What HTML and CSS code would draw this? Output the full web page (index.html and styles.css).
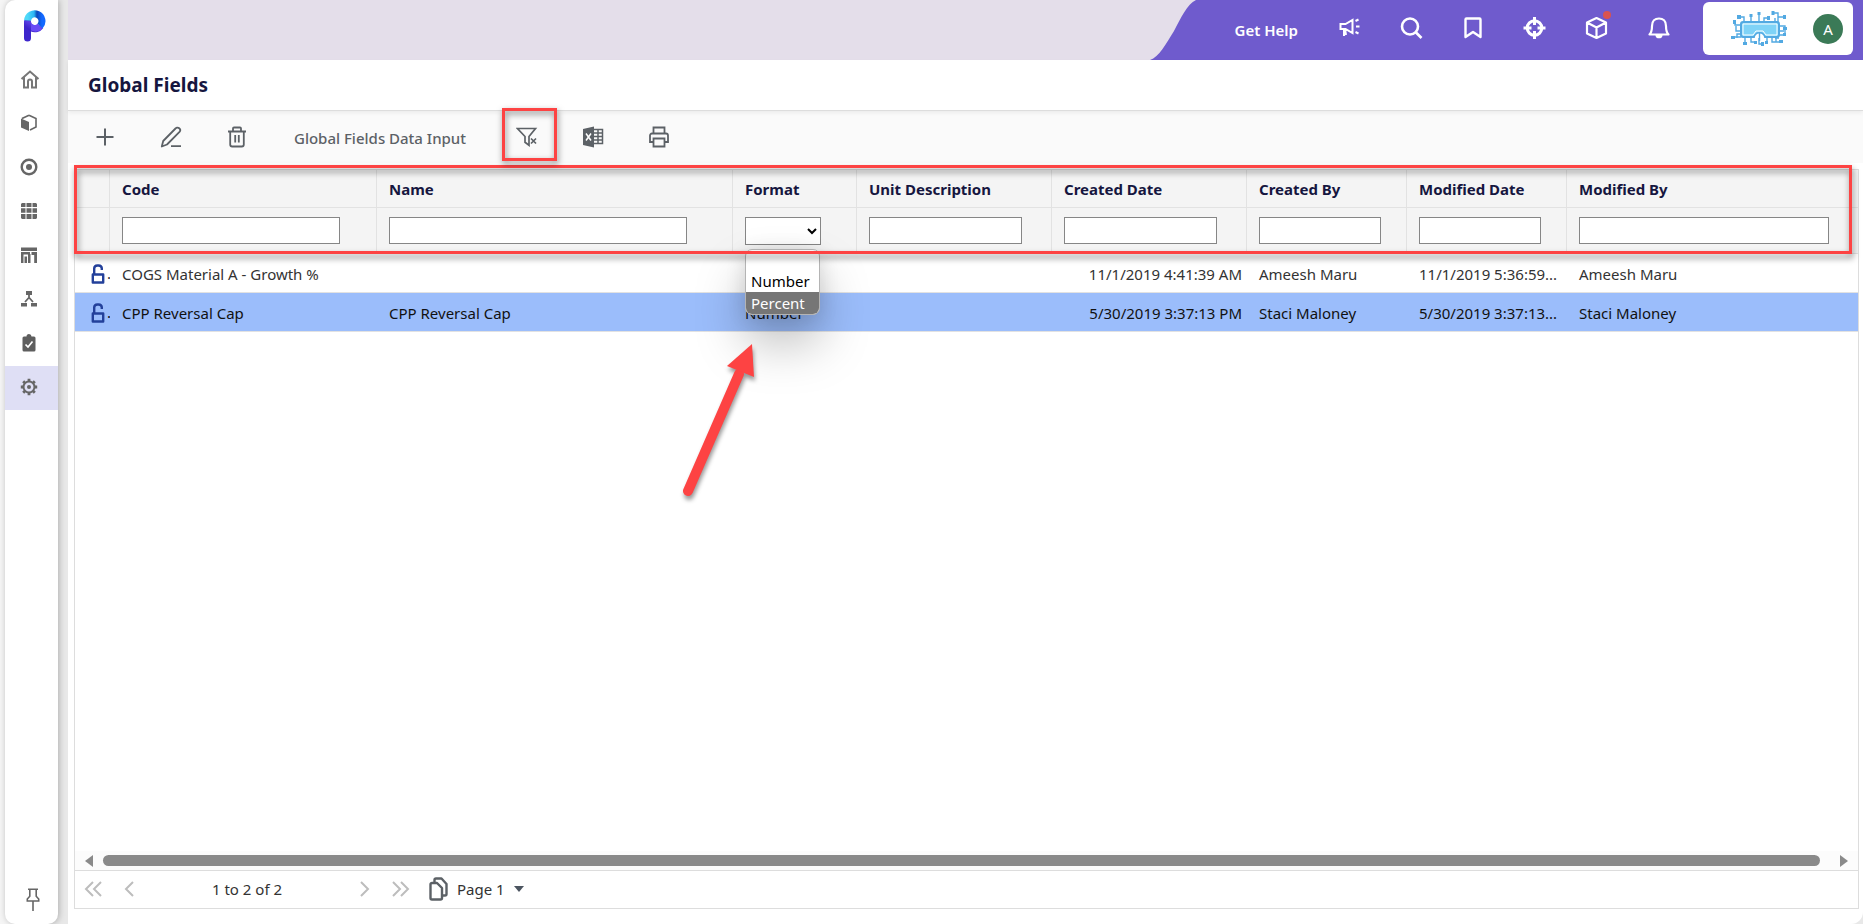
FILE: index.html
```html
<!DOCTYPE html>
<html lang="en">
<head>
<meta charset="utf-8">
<title>Global Fields</title>
<link rel="stylesheet" href="styles.css">
</head>
<body>
<div class="app">
  <nav class="sidebar" aria-label="Main">
    <a class="brand" href="#" aria-label="Home page">
      <svg width="22" height="32" viewBox="0 0 22 32">
        <defs>
          <linearGradient id="stem" x1="0" y1="1" x2="1" y2="0"><stop offset="0" stop-color="#3a22c8"/><stop offset="1" stop-color="#7a5cff"/></linearGradient>
          <linearGradient id="arc" x1="0" y1="0" x2="1" y2="0"><stop offset="0" stop-color="#4fd8f8"/><stop offset=".45" stop-color="#28b4f4"/><stop offset=".65" stop-color="#0a48b8"/><stop offset="1" stop-color="#1268ff"/></linearGradient>
        </defs>
        <path d="M3.500 28V12" stroke="#3d26cc" stroke-width="7" stroke-linecap="round"/>
        <path d="M3.500 11A7.300 7.300 0 0 0 16.500 16" fill="none" stroke="url(#stem)" stroke-width="7"/>
        <path d="M3.600 10.500A7.200 7.200 0 1 1 16 16" fill="none" stroke="url(#arc)" stroke-width="7"/>
        <path d="M17.500 19.500A10 10 0 0 1 7 20.500V13a5 5 0 0 0 7 1z" fill="#6a4cf5"/>
      </svg>
    </a>
    <a class="side-item" href="#" aria-label="Home"><svg width="24" height="24" viewBox="0 0 24 24" fill="none" stroke="#777" stroke-width="2"><path d="M5 11.500h2v9h4v-6a2 2 0 0 1 4 0v6h4v-9h2M4.500 12 13 4.500l8.500 7.500"/></svg></a>
    <a class="side-item" href="#" aria-label="Models"><svg width="18" height="18" viewBox="0 0 18 18"><path d="M9 1.200 16 4.500v8.500L10 16" fill="none" stroke="#666" stroke-width="1.600"/><path d="M9 1.200 2 4.500" stroke="#666" stroke-width="1.600"/><path d="M1 4.500 9 8v9L1 13.500z" fill="#666"/></svg></a>
    <a class="side-item" href="#" aria-label="Targets"><svg width="18" height="18" viewBox="0 0 18 18"><circle cx="9" cy="9" r="7.300" fill="none" stroke="#666" stroke-width="2.400"/><circle cx="9" cy="9" r="3" fill="#666"/></svg></a>
    <a class="side-item" href="#" aria-label="Sheets"><svg width="18" height="18" viewBox="0 0 18 18" fill="#666"><path d="M2 1h3.500v4H1V2zM6.500 1h5v4h-5zM12.500 1H16l1 1v3h-4.500zM1 6.200h4.500v4.600H1zM6.500 6.200h5v4.600h-5zM12.500 6.200H17v4.600h-4.500zM1 12h4.500v5H2l-1-1zM6.500 12h5v5h-5zM12.500 12H17v4l-1 1h-3.500z"/></svg></a>
    <a class="side-item" href="#" aria-label="Reports"><svg width="18" height="18" viewBox="0 0 18 18" fill="#666"><path d="M1 1.500h16V5H1zM1 6h9v2.500H3.500V17H1zM4.500 10.500H7V17H4.500zM8 8h2.500v9H8zM11.500 6H17v11h-2.800V9h-2.700z"/></svg></a>
    <a class="side-item" href="#" aria-label="Hierarchy"><svg width="18" height="18" viewBox="0 0 18 18"><path d="M6 1h6v4H6zM1 13h6v3.500H1zM11 13h6v3.500h-6z" fill="#666"/><path d="M9 5v2.500M5 12l4-4.500 4 4.500" fill="none" stroke="#666" stroke-width="1.800"/></svg></a>
    <a class="side-item" href="#" aria-label="Tasks"><svg width="18" height="18" viewBox="0 0 18 18"><path d="M4 2.500h2.500a2.500 2.500 0 0 1 5 0H14A1.500 1.500 0 0 1 15.500 4v12a1.500 1.500 0 0 1-1.500 1.500H4A1.500 1.500 0 0 1 2.500 16V4A1.500 1.500 0 0 1 4 2.500z" fill="#5e5e5e"/><path d="m5.500 10.500 2.500 2.500 4.500-5.500" fill="none" stroke="#fff" stroke-width="1.700"/></svg></a>
    <a class="side-item side-item-active" href="#" aria-label="Settings"><svg width="18" height="18" viewBox="0 0 18 18" fill="none" stroke="#666"><circle cx="9" cy="9" r="5.500" stroke-width="2"/><circle cx="9" cy="9" r="2" fill="#666" stroke="none"/><path d="M9 .8v2.400M9 14.800v2.400M.8 9h2.400M14.800 9h2.400M3.200 3.200l1.700 1.700M13.100 13.100l1.700 1.700M3.200 14.800l1.700-1.700M13.100 4.900l1.700-1.700" stroke-width="2.800"/></svg></a>
    <button class="pin" type="button" aria-label="Pin menu"><svg width="14" height="24" viewBox="0 0 14 24" fill="none" stroke="#666" stroke-width="1.600"><path d="M2 1.300h10M3.800 1.300v7L1.300 11v2h11.400v-2l-2.500-2.700v-7M7 13v10"/></svg></button>
  </nav>

  <main class="main">
    <header class="topbar">
      <div class="topbar-nav">
        <svg class="wave" width="48" height="60" viewBox="0 0 48 60" aria-hidden="true"><path d="M0 60C9 57 16 44 24 31 31 18 37 4 46 0h2v60z" fill="#6f5bcd"/></svg>
        <a class="help" href="#">Get Help</a>
        <button class="nav-btn" type="button" aria-label="Announcements"><svg width="24" height="24" viewBox="0 0 24 24" fill="none" stroke="#fff" stroke-width="2"><path d="M3.500 8v5h5l7 4V4l-7 4zM7 13v7M8 13l1 6M18.500 5l3-1.500M19 10.500h3.500M18.500 16l3 1.500"/></svg></button>
        <button class="nav-btn" type="button" aria-label="Search"><svg width="24" height="24" viewBox="0 0 24 24" fill="none" stroke="#fff" stroke-width="2.600"><circle cx="11" cy="10.500" r="8"/><path d="m16.500 16 6 6"/></svg></button>
        <button class="nav-btn" type="button" aria-label="Bookmarks"><svg width="24" height="24" viewBox="0 0 24 24" fill="none" stroke="#fff" stroke-width="2.400" stroke-linejoin="round"><path d="M4.500 3.500a1 1 0 0 1 1-1h13a1 1 0 0 1 1 1V21L12 16l-7.500 5z"/></svg></button>
        <button class="nav-btn" type="button" aria-label="Focus"><svg width="24" height="24" viewBox="0 0 24 24" fill="none" stroke="#fff"><circle cx="11.500" cy="12" r="7.300" stroke-width="3"/><path d="M11.500 1v8M11.500 15v8M.5 12h8M14.500 12h8" stroke-width="3"/></svg></button>
        <button class="nav-btn" type="button" aria-label="Packages"><svg width="24" height="24" viewBox="0 0 24 24" fill="none" stroke="#fff" stroke-width="2.200" stroke-linejoin="round"><path d="m11.500 2 9.500 4.500v11L11.500 22 2 17.500v-11zM2 6.500l9.500 5 9.500-5M11.500 11.500V22"/></svg><span class="dot"></span></button>
        <button class="nav-btn" type="button" aria-label="Notifications"><svg width="24" height="24" viewBox="0 0 24 24" fill="none" stroke="#fff" stroke-width="2.200" stroke-linejoin="round"><path d="M2.500 18.500c2.500-2.500 2.500-5 2.500-8.500 0-5 3-7.500 7-7.500s7 2.500 7 7.500c0 3.500 0 6 2.500 8.500z"/><path d="M9.500 19c.5 3 4.500 3 5 0z" fill="#fff"/></svg></button>
        <div class="account">
          <svg width="56" height="36" viewBox="0 0 56 36" fill="none" stroke="#52a9e2" stroke-width="1.400" aria-label="Company logo">
            <path d="M13 11V6H8M20 11V4M28 11V3M33 11V7h4M44 11V7M47 10V6h7M47 11V2h-5M10 14H4v-4M10 20H5v-5M10 26H2M10 23h-4v4M48 15h6v3M48 20h5M48 24h6v-5M48 27h-4M14 26v6M20 26v5h5M28 22v11h3M36 27v4M41 27v4h8M45 25v6"/>
            <g fill="#52a9e2" stroke="none"><path d="M6 4h4v4H6zM18.500 3h3v3h-3zM26.500 1h3v3h-3zM36 5h3v4h-3zM40.500 0h3v4h-3zM52 4h3v4h-3zM2 9h3v4H2zM0 25h4v3H0zM52 16h4v3h-4zM52 22h3v3h-3zM12 31h4v3h-4zM23 30h3v3h-3zM30 31h3v4h-3zM34 30h3v3h-3zM48 29h4v3h-4z"/></g>
            <rect x="10" y="11" width="38" height="15" rx="2" fill="#7fd3f7" stroke-width="2"/>
            <path d="M12 13h34v11H35l-3-4h-7l-3 4H12z" stroke="#fff" stroke-width="1"/>
            <path d="M23 27c1-7 10-7 11 0" fill="#fff"/><path d="M28.500 22v8"/>
          </svg>
          <button class="avatar" type="button">A</button>
        </div>
      </div>
    </header>

    <div class="titlebar"><h1 class="title">Global Fields</h1></div>

    <div class="toolbar">
      <button class="tool" type="button" aria-label="Add"><svg width="22" height="22" viewBox="0 0 22 22" fill="none" stroke="#5c6166" stroke-width="2"><path d="M11 2.500v17M2.500 11h17"/></svg></button>
      <button class="tool" type="button" aria-label="Edit"><svg width="22" height="22" viewBox="0 0 22 22" fill="none" stroke="#5c6166" stroke-width="1.800" stroke-linejoin="round"><path d="M1.800 20.500 3.200 15 15.500 2.500a2.400 2.400 0 0 1 4 3.400L7 18.500zM11 20.200h10"/></svg></button>
      <button class="tool" type="button" aria-label="Delete"><svg width="22" height="22" viewBox="0 0 22 22" fill="none" stroke="#5c6166" stroke-width="1.800"><path d="M2 5.500h18M4.200 5.500v13a2 2 0 0 0 2 2h9.600a2 2 0 0 0 2-2v-13M7 5V2.500a1 1 0 0 1 1-1h6a1 1 0 0 1 1 1V5M9.200 9v7.500M12.800 9v7.500"/></svg></button>
      <button class="tool tool-text" type="button">Global Fields Data Input</button>
      <button class="tool tool-marked" type="button" aria-label="Clear filter"><svg width="22" height="22" viewBox="0 0 22 22" fill="none" stroke="#5c6166" stroke-width="1.700"><path d="M1.500 2.500h18L13 10.500v8.800l-4-3v-5.800zM15 12.500l5 5M20 12.500l-5 5"/></svg></button>
      <button class="tool" type="button" aria-label="Export to Excel"><svg width="22" height="22" viewBox="0 0 22 22"><path d="M1 3l11-2.500v21L1 19z" fill="#5c6166"/><path d="M12 3.500h8.500v14H12M12 7h8M12 10.500h8M12 14h8M16 4v13" fill="none" stroke="#5c6166" stroke-width="1.500"/><path d="m4 7.500 5 7M9 7.500l-5 7" stroke="#fff" stroke-width="1.500"/></svg></button>
      <button class="tool" type="button" aria-label="Print"><svg width="22" height="22" viewBox="0 0 22 22" fill="none" stroke="#5c6166" stroke-width="1.800"><path d="M5.500 7V1.500h11V7M5 16H2V9.500a2 2 0 0 1 2-2h14a2 2 0 0 1 2 2V16h-3M5.500 12.500h11v8h-11z"/></svg></button>
    </div>

    <section class="grid" aria-label="Global fields">
      <table class="table">
        <colgroup><col class="c-lock"><col class="c-code"><col class="c-name"><col class="c-format"><col class="c-date"><col class="c-date"><col class="c-user"><col class="c-user"><col></colgroup>
        <thead>
          <tr class="head">
            <th aria-label="Lock"></th><th id="h-code">Code</th><th id="h-name">Name</th><th id="h-format">Format</th><th id="h-unit">Unit Description</th><th id="h-created">Created Date</th><th id="h-cby">Created By</th><th id="h-modified">Modified Date</th><th id="h-mby">Modified By</th>
          </tr>
          <tr class="filters">
            <td></td>
            <td><input class="filter" type="text" aria-labelledby="h-code"></td>
            <td><input class="filter" type="text" aria-labelledby="h-name"></td>
            <td class="format-cell">
              <select class="filter-select" aria-labelledby="h-format"><option></option><option>Number</option><option>Percent</option></select>
              <ul class="popup" role="listbox" aria-labelledby="h-format">
                <li class="option option-blank" role="option"></li>
                <li class="option" role="option">Number</li>
                <li class="option option-active" role="option" aria-selected="true">Percent</li>
              </ul>
            </td>
            <td><input class="filter" type="text" aria-labelledby="h-unit"></td>
            <td><input class="filter" type="text" aria-labelledby="h-created"></td>
            <td><input class="filter" type="text" aria-labelledby="h-cby"></td>
            <td><input class="filter" type="text" aria-labelledby="h-modified"></td>
            <td><input class="filter" type="text" aria-labelledby="h-mby"></td>
          </tr>
        </thead>
        <tbody>
          <tr class="row">
            <td class="lock"><svg width="14" height="20" viewBox="0 0 14 20" fill="none" stroke="#23409a" stroke-width="2.400" stroke-linejoin="round"><path d="M1.800 10.500h10.400v8H1.800zM3.200 10V4.500A3.500 3 0 0 1 6.500 1.500h1a3.500 3 0 0 1 3.300 3V6"/></svg>.</td>
            <td>COGS Material A - Growth %</td><td></td><td></td><td></td><td class="num">11/1/2019 4:41:39 AM</td><td>Ameesh Maru</td><td>11/1/2019 5:36:59...</td><td>Ameesh Maru</td>
          </tr>
          <tr class="row row-selected">
            <td class="lock"><svg width="14" height="20" viewBox="0 0 14 20" fill="none" stroke="#23409a" stroke-width="2.400" stroke-linejoin="round"><path d="M1.800 10.500h10.400v8H1.800zM3.200 10V4.500A3.500 3 0 0 1 6.500 1.500h1a3.500 3 0 0 1 3.300 3V6"/></svg>.</td>
            <td>CPP Reversal Cap</td><td>CPP Reversal Cap</td><td>Number</td><td></td><td class="num">5/30/2019 3:37:13 PM</td><td>Staci Maloney</td><td>5/30/2019 3:37:13...</td><td>Staci Maloney</td>
          </tr>
        </tbody>
      </table>
      <div class="outline" aria-hidden="true"></div>
      <svg class="arrow" width="76" height="160" viewBox="0 0 76 160" aria-hidden="true"><path d="M8 151 59 34" stroke="#fd4343" stroke-width="10" stroke-linecap="round"/><path d="M72 4 47 26l27 11z" fill="#fd4343"/></svg>

      <div class="scrollbar">
        <svg width="8" height="12" viewBox="0 0 8 12" fill="#8a8a8a"><path d="M8 0v12L0 6z"/></svg>
        <div class="thumb"></div>
        <svg width="8" height="12" viewBox="0 0 8 12" fill="#8a8a8a"><path d="M0 0v12l8-6z"/></svg>
      </div>
      <footer class="pager">
        <button class="page-btn" type="button" aria-label="First page"><svg width="18" height="16" viewBox="0 0 18 16"><path d="M9 1 2 8l7 7M17 1l-7 7 7 7"/></svg></button>
        <button class="page-btn" type="button" aria-label="Previous page"><svg width="10" height="16" viewBox="0 0 10 16"><path d="M9 1 2 8l7 7"/></svg></button>
        <span class="range">1 to 2 of 2</span>
        <button class="page-btn" type="button" aria-label="Next page"><svg width="10" height="16" viewBox="0 0 10 16"><path d="m1 1 7 7-7 7"/></svg></button>
        <button class="page-btn" type="button" aria-label="Last page"><svg width="18" height="16" viewBox="0 0 18 16"><path d="m1 1 7 7-7 7M9 1l7 7-7 7"/></svg></button>
        <button class="page-select" type="button">
          <svg width="19" height="24" viewBox="0 0 19 24" fill="none" stroke="#5c6166" stroke-width="2.400" stroke-linejoin="round"><path d="M1.500 7.500a1.500 1.500 0 0 1 1.500-1.500h5l5 5v10a1.500 1.500 0 0 1-1.500 1.500H3A1.500 1.500 0 0 1 1.500 21zM5.500 5.500V3A1.500 1.500 0 0 1 7 1.500h5.500l5 5.500v10a1.500 1.500 0 0 1-1.500 1.500h-2"/></svg>
          Page 1
          <svg width="10" height="6" viewBox="0 0 10 6" fill="#4c5560"><path d="M0 0h10L5 6z"/></svg>
        </button>
      </footer>
    </section>
  </main>
</div>
</body>
</html>
```

FILE: styles.css
```css
* { box-sizing: border-box; }

body {
  margin: 0;
  background: #e8e8e8;
  font-family: "Noto Sans", "Open Sans", sans-serif;
  font-size: 15px;
  color: #333;
}

button {
  margin: 0;
  padding: 0;
  border: 0;
  background: none;
  font: inherit;
  color: inherit;
}

svg { display: block; flex: none; }

.app {
  display: flex;
  gap: 10px;
  height: 100vh;
  padding-left: 5px;
  background: linear-gradient(90deg, #f5f5f5 30px, #e8e8e8 30px);
}

.sidebar {
  display: flex;
  flex-direction: column;
  flex: 0 0 53px;
  background: #fff;
  border-radius: 10px;
  border-top-right-radius: 0;
  box-shadow: 1px 0 6px rgba(0, 0, 0, 0.25);
}

.brand {
  display: flex;
  justify-content: center;
  height: 58px;
  padding: 10px 0 0 6px;
}

.side-item {
  display: flex;
  align-items: center;
  justify-content: center;
  height: 44px;
  padding: 0 5px 2px 0;
}

.side-item-active { background: #dfdff5; }

.pin {
  display: flex;
  justify-content: center;
  margin-top: auto;
  margin-bottom: 12px;
  padding-left: 3px;
}

.main {
  display: flex;
  flex-direction: column;
  flex: 1;
  min-width: 0;
  background: #fff;
  border-bottom-right-radius: 12px;
}

.topbar {
  display: flex;
  justify-content: flex-end;
  flex: 0 0 60px;
  background: #e4deea;
}

.topbar-nav {
  display: flex;
  background: linear-gradient(90deg, transparent 47px, #6f5bcd 47px);
  padding-right: 10px;
}

.help {
  padding: 18px 20px 0 37px;
  line-height: 24px;
  font-weight: 600;
  color: #fff;
  text-decoration: none;
}

.nav-btn {
  position: relative;
  width: 62px;
  height: 56px;
  display: flex;
  align-items: center;
  justify-content: center;
}

.dot {
  position: absolute;
  top: 11px;
  right: 17px;
  width: 8px;
  height: 8px;
  border-radius: 50%;
  background: #d9534f;
}

.account {
  display: flex;
  align-items: center;
  justify-content: space-between;
  width: 150px;
  height: 53px;
  margin: 2px 0 0 13px;
  padding: 0 10px 0 28px;
  background: #fff;
  border-radius: 6px;
}

.avatar {
  width: 30px;
  height: 30px;
  border-radius: 50%;
  background: #3b7a57;
  color: #fff;
}

.titlebar {
  flex: none;
  z-index: 1;
  padding: 0 20px;
  border-bottom: 1px solid #ddd;
  box-shadow: 0 2px 4px rgba(0, 0, 0, 0.06);
}

.title {
  margin: 0;
  font-size: 19px;
  line-height: 50px;
  font-weight: 700;
  color: #16163f;
}

.toolbar {
  display: flex;
  flex: 0 0 52px;
  padding-left: 4px;
  background: #fafafa;
}

.tool {
  position: relative;
  display: flex;
  align-items: center;
  justify-content: center;
  width: 66px;
}

.tool-text {
  width: auto;
  padding: 2px 28px 0 24px;
  font-weight: 500;
  color: #5c6166;
}

.tool-marked { z-index: 2; }

.tool-marked::after {
  content: "";
  position: absolute;
  inset: -3px 3px 2px 8px;
  border: 3px solid #fd4343;
  filter: drop-shadow(1px 3px 3px rgba(0, 0, 0, 0.5));
}

.grid {
  position: relative;
  display: flex;
  flex-direction: column;
  flex: 1;
  margin: 6px 4px 15px 6px;
  border: 1px solid #ddd;
}

.table {
  width: 100%;
  table-layout: fixed;
  border-collapse: separate;
  border-spacing: 0;
}

.c-lock { width: 35px; }
.c-code { width: 267px; }
.c-name { width: 356px; }
.c-format { width: 124px; }
.c-date { width: 195px; }
.c-user { width: 160px; }

.table th,
.table td {
  padding: 0 0 0 12px;
  border-bottom: 1px solid #e2e2e2;
  text-align: left;
  white-space: nowrap;
}

.head th {
  height: 38px;
  font-weight: 700;
  color: #16163f;
}

.head,
.filters { background: #f4f4f4; }

.head th:not(:last-child),
.filters td:not(:last-child) { border-right: 1px solid #e2e2e2; }

.table .filters td {
  height: 46px;
  padding: 9px 12px 0;
  vertical-align: top;
}

.table .filters td:last-child { padding-right: 1px; }

.filter,
.filter-select {
  display: block;
  width: 90%;
  height: 27px;
  border: 1px solid #868686;
  border-radius: 0;
  background: #fff;
}

.filter-select {
  width: 76px;
  height: 28px;
  color: #000;
}

.table .format-cell { position: relative; }

.popup {
  position: absolute;
  top: 41px;
  left: 12px;
  width: 75px;
  margin: 0;
  padding: 0;
  overflow: hidden;
  list-style: none;
  background: #fff;
  border: 1px solid #b4b4b4;
  border-radius: 7px;
  box-shadow: 0 28px 50px rgba(0, 0, 0, 0.26), 0 2px 20px rgba(0, 0, 0, 0.12);
  color: #000;
}

.option {
  height: 22px;
  padding-left: 5px;
  line-height: 22px;
}

.option-blank { height: 20px; }

.option-active {
  background: #767676;
  color: #fff;
}

.table .row td {
  height: 39px;
  padding-top: 1px;
}

.row-selected {
  background: #9bbdfb;
  color: #111;
}

.table .num {
  padding-right: 5px;
  text-align: right;
}

.table .row .lock {
  padding-left: 16px;
  overflow: hidden;
}

.lock svg {
  display: inline-block;
  margin-right: 2px;
  vertical-align: middle;
}

.outline {
  position: absolute;
  top: -5px;
  left: -1px;
  right: 6px;
  height: 89px;
  border: 3px solid #fd4343;
  filter: drop-shadow(1px 4px 3px rgba(0, 0, 0, 0.5));
  pointer-events: none;
}

.arrow {
  position: absolute;
  top: 170px;
  left: 605px;
  filter: drop-shadow(1px 4px 2px rgba(0, 0, 0, 0.4));
}

.scrollbar {
  display: flex;
  align-items: center;
  gap: 10px;
  height: 20px;
  margin-top: auto;
  padding: 0 10px;
  border-bottom: 1px solid #ddd;
  background: #fcfcfc;
}

.scrollbar svg:last-child { margin-left: 10px; }

.thumb {
  flex: 1;
  height: 11px;
  border-radius: 6px;
  background: #8a8a8a;
}

.pager {
  display: flex;
  align-items: center;
  height: 37px;
  padding: 0 0 2px 9px;
  gap: 22px;
}

.page-btn svg {
  fill: none;
  stroke: #bdbdbd;
  stroke-width: 2;
}

.range {
  width: 182px;
  text-align: center;
}

.page-select {
  display: flex;
  align-items: center;
  gap: 9px;
  margin-left: -3px;
}
```
